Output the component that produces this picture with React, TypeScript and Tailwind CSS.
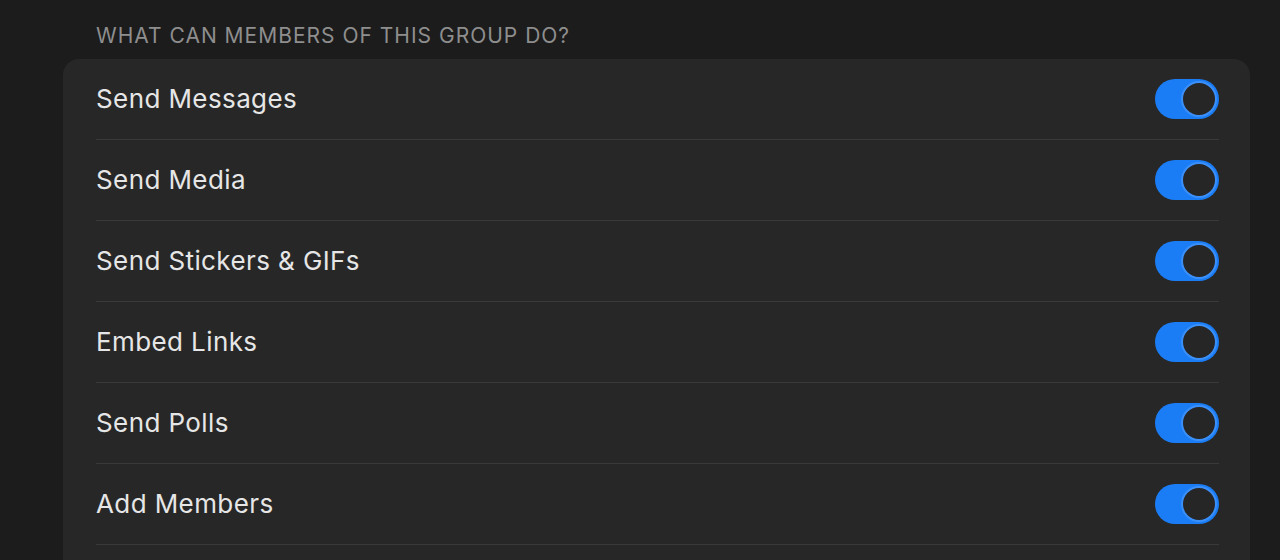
import { useState } from 'react'

const permissions = [
  'Send Messages',
  'Send Media',
  'Send Stickers & GIFs',
  'Embed Links',
  'Send Polls',
  'Add Members',
]

function Toggle({ on, onChange }: { on: boolean; onChange: () => void }) {
  return (
    <button
      onClick={onChange}
      className={`relative h-[40px] w-[64px] shrink-0 rounded-full transition-colors ${
        on ? 'bg-[#1a7df6]' : 'bg-[#3a3a3c]'
      }`}
    >
      <span
        className={`absolute top-[2px] h-[36px] w-[36px] rounded-full border-2 bg-[#262626] transition-all ${
          on ? 'left-[26px] border-[#3b8ff8]' : 'left-[2px] border-[#3a3a3c]'
        }`}
      />
    </button>
  )
}

export default function App() {
  const [enabled, setEnabled] = useState<boolean[]>(permissions.map(() => true))

  return (
    <div
      className="h-[560px] overflow-hidden bg-[#1c1c1c] pl-[63px] pr-[30px]"
      style={{ fontFamily: 'Inter, "Liberation Sans", sans-serif' }}
    >
      <div className="pl-[33px] pt-[24px] pb-[11px] text-[21px] leading-[24px] tracking-[1px] text-[#8e8e8e]">
        WHAT CAN MEMBERS OF THIS GROUP DO?
      </div>

      <div className="rounded-[16px] bg-[#272727] pl-[33px] pr-[31px] pb-[40px]">
        {permissions.map((label, i) => (
          <div key={label} className="flex h-[81px] items-center border-b border-[#3a3a3a]">
            <span className="flex-1 text-[26px] leading-[32px] tracking-[0.4px] text-[#e6e6e6]">
              {label}
            </span>
            <Toggle
              on={enabled[i]}
              onChange={() => setEnabled((prev) => prev.map((v, j) => (j === i ? !v : v)))}
            />
          </div>
        ))}
      </div>
    </div>
  )
}
